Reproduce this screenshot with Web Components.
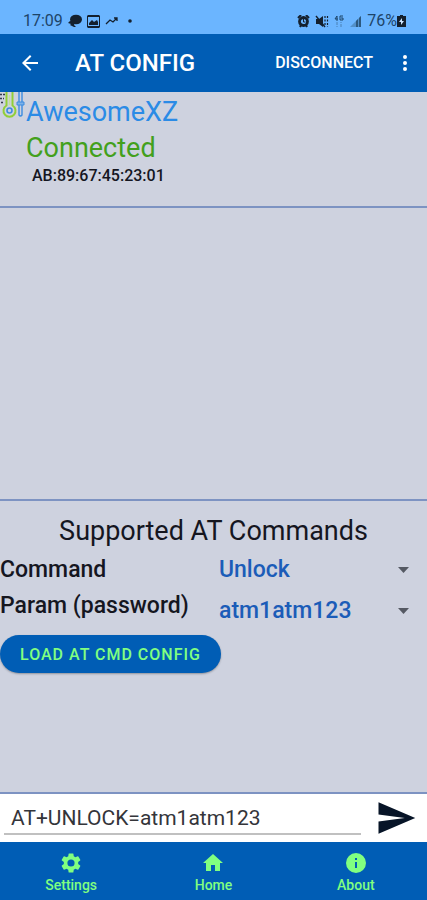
<!DOCTYPE html>
<html lang="en">
<head>
<meta charset="utf-8">
<meta name="viewport" content="width=device-width, initial-scale=1">
<title>AT Config</title>
<style>
  :root {
    --primary: #005db5;
    --status: #6bb5ff;
    --surface: #ced2df;
    --divider: #7d93c2;
    --accent: #80ff80;
    --link: #1b5cb8;
    --text: #15161f;
  }
  body {
    margin: 0;
    font-family: Roboto, "Liberation Sans", sans-serif;
    color: var(--text);
    background: var(--surface);
  }
</style>
</head>
<body>
<at-config-screen>
  <status-bar time="17:09" battery="76%"></status-bar>
  <app-bar heading="AT CONFIG" action="DISCONNECT"></app-bar>
  <device-info name="AwesomeXZ" state="Connected" address="AB:89:67:45:23:01"></device-info>
  <log-panel></log-panel>
  <command-panel heading="Supported AT Commands" action="LOAD AT CMD CONFIG">
    <select-row name="command" label="Command" value="Unlock"></select-row>
    <select-row name="param" label="Param (password)" value="atm1atm123" tall></select-row>
  </command-panel>
  <command-input value="AT+UNLOCK=atm1atm123"></command-input>
  <bottom-nav>
    <nav-item icon="settings" href="#settings">Settings</nav-item>
    <nav-item icon="home" href="#home">Home</nav-item>
    <nav-item icon="info" href="#about">About</nav-item>
  </bottom-nav>
</at-config-screen>

<script>
const icons = {
  settings: "M19.14 12.94c.04-.3.06-.61.06-.94s-.02-.64-.07-.94l2.03-1.58a.49.49 0 0 0 .12-.61l-1.92-3.32a.49.49 0 0 0-.59-.22l-2.39.96a7 7 0 0 0-1.62-.94l-.36-2.54a.48.48 0 0 0-.48-.41h-3.84a.47.47 0 0 0-.47.41l-.36 2.54c-.59.24-1.13.57-1.62.94l-2.39-.96a.48.48 0 0 0-.59.22L2.74 8.87a.47.47 0 0 0 .12.61l2.03 1.58a6 6 0 0 0-.02 1.88l-2.03 1.58a.49.49 0 0 0-.12.61l1.92 3.32c.12.22.37.29.59.22l2.39-.96c.5.38 1.03.7 1.62.94l.36 2.54c.05.24.24.41.48.41h3.84c.24 0 .44-.17.47-.41l.36-2.54a7 7 0 0 0 1.62-.94l2.39.96c.22.08.47 0 .59-.22l1.92-3.32a.47.47 0 0 0-.12-.61zM12 15.6a3.6 3.6 0 1 1 0-7.2 3.6 3.6 0 0 1 0 7.2z",
  home: "M10 20v-6h4v6h5v-8h3L12 3 2 12h3v8z",
  info: "M12 2a10 10 0 1 0 0 20 10 10 0 0 0 0-20zm1 15h-2v-6h2zm0-8h-2V7h2z",
  back: "M20 11H7.83l5.59-5.59L12 4l-8 8 8 8 1.41-1.41L7.83 13H20z",
  more: "M12 8a2 2 0 1 0 0-4 2 2 0 0 0 0 4zm0 2a2 2 0 1 0 0 4 2 2 0 0 0 0-4zm0 6a2 2 0 1 0 0 4 2 2 0 0 0 0-4z",
  send: "M2 21L23 12 2 3v7l15 2-15 2z"
};

const icon = (name, size) =>
  `<svg width="${size}" height="${size}" viewBox="0 0 24 24" fill="currentColor" aria-hidden="true"><path d="${icons[name]}"/></svg>`;

class BaseElement extends HTMLElement {
  constructor() {
    super();
    this.attachShadow({ mode: "open" });
  }
  connectedCallback() {
    this.shadowRoot.innerHTML = this.template();
  }
  attr(name) {
    return this.getAttribute(name) || "";
  }
}

class AtConfigScreen extends BaseElement {
  template() {
    return `
      <style>
        :host {
          display: flex;
          flex-direction: column;
          min-height: 100vh;
        }
      </style>
      <slot></slot>
    `;
  }
}

class StatusBar extends BaseElement {
  template() {
    return `
      <style>
        :host {
          display: flex;
          align-items: center;
          justify-content: space-between;
          box-sizing: border-box;
          height: 34px;
          padding: 8px 21px 0 23px;
          background: var(--status);
          color: #1d4468;
          font-size: 16px;
          line-height: 20px;
        }
        .group {
          display: flex;
          align-items: center;
          gap: 5px;
        }
        .charge {
          display: flex;
          align-items: center;
        }
        svg {
          display: block;
          fill: #14202e;
        }
      </style>
      <div class="group">
        <span>${this.attr("time")}</span>
        <svg width="14" height="14" viewBox="0 0 14 14"><ellipse cx="8" cy="5.5" rx="6" ry="4.8"/><path d="M2 7l-2 2 3 1-1 1 4 2h2l-2-2 1-3z"/></svg>
        <svg width="13" height="13" viewBox="0 0 13 13"><path fill-rule="evenodd" d="M1 0h11l1 1v11l-1 1H1l-1-1V1zm0 2v9h11V2zm1 8V8l3-3 2 2 3-2 1 2v3z"/></svg>
        <svg width="13" height="10" viewBox="0 0 13 10"><path d="M1 8l4-4 3 2 4-4M9 2h3v3" fill="none" stroke="#14202e" stroke-width="1.3"/></svg>
        <svg width="12" height="6" viewBox="0 0 12 6"><circle cx="7" cy="3" r="1.8"/></svg>
      </div>
      <div class="group">
        <svg width="13" height="13" viewBox="0 0 13 13"><path d="M1 3l3-3M12 3L9 0M3 12l1-2M10 12l-1-2" stroke="#14202e" stroke-width="2"/><circle cx="6.5" cy="6.5" r="4" fill="none" stroke="#14202e" stroke-width="2.8"/><path d="M6.5 4v3h2" fill="none" stroke="#14202e"/></svg>
        <svg width="14" height="13" viewBox="0 0 14 13"><path d="M1 4h3l4-3v11L4 9H1z"/><path d="M1 1l9 11" stroke="#14202e" stroke-width="1.4"/><path d="M10 1v10M12.5 1v11" stroke="#14202e" stroke-width="1.2" stroke-dasharray="2 1.5"/></svg>
        <svg width="10" height="13" viewBox="0 0 10 13"><path d="M3 1L1 4h3M3 1v5M9 1H6v4h3V3H7" fill="none" stroke="#1d4468"/><path d="M3 7v5M7 12V7" stroke="#4a80b4" stroke-dasharray="3 1"/></svg>
        <svg width="13" height="12" viewBox="0 0 13 12"><path d="M1 12L12 1v11z" fill="#5290c9"/><path d="M7 12V6l2-2v8zM10 12V3l2-2v11z" fill="#2c587e"/></svg>
        <div class="charge">
          <span>${this.attr("battery")}</span>
          <svg width="9" height="12" viewBox="0 0 9 12"><path d="M3 0h3v1h3v11H0V1h3z"/><path d="M5 3L2 7h2v3l3-4H5z" fill="#cfe6ff"/></svg>
        </div>
      </div>
    `;
  }
}

class AppBar extends BaseElement {
  template() {
    return `
      <style>
        :host {
          display: flex;
          align-items: center;
          box-sizing: border-box;
          height: 58px;
          padding: 0 10px 0 18px;
          background: var(--primary);
          color: #fff;
        }
        h1 {
          flex: 1;
          margin: 0 0 0 33px;
          font-size: 24px;
          font-weight: 500;
          line-height: 32px;
        }
        button {
          display: flex;
          padding: 0;
          border: 0;
          background: none;
          color: inherit;
          font: 500 16px/24px Roboto, "Liberation Sans", sans-serif;
        }
        .more {
          margin-left: 20px;
        }
      </style>
      <button aria-label="Back">${icon("back", 24)}</button>
      <h1>${this.attr("heading")}</h1>
      <button>${this.attr("action")}</button>
      <button class="more" aria-label="More options">${icon("more", 24)}</button>
    `;
  }
}

class DeviceInfo extends BaseElement {
  template() {
    return `
      <style>
        :host {
          display: flex;
          align-items: flex-start;
          box-sizing: border-box;
          height: 116px;
          border-bottom: 2px solid var(--divider);
        }
        svg {
          flex: none;
          width: 26px;
          height: 28px;
        }
        p {
          margin: 0;
          font-size: 27px;
          line-height: 36px;
        }
        .name {
          margin-top: 2px;
          color: #2b8be6;
        }
        .state {
          color: #43a01c;
        }
        .address {
          padding-left: 6px;
          font-size: 16px;
          font-weight: 500;
          line-height: 20px;
        }
      </style>
      <svg viewBox="0 0 26 28" fill="none" aria-hidden="true">
        <path d="M0 2.500h5M0 6.500h4M1 10.500h3" stroke="#343b4d" stroke-width="1.5" stroke-dasharray="2 1"/>
        <path d="M6.5 0v13.500a6 6 0 1 0 6 0V0" stroke="#91cf38" stroke-width="2"/>
        <path d="M9.5 3v10" stroke="#c3dd9f" stroke-width="1.5"/>
        <circle cx="9.5" cy="18.500" r="2.500" stroke="#3d8ce0" stroke-width="1.6"/>
        <path d="M19 0v10M22 0v10M19 13v10q1.500 2 3 0V13" stroke="#3d8ce0" stroke-width="1.4"/>
        <path d="M17 10h7v3h-7z" fill="#7fb2e8" stroke="#3d8ce0"/>
      </svg>
      <div>
        <p class="name">${this.attr("name")}</p>
        <p class="state">${this.attr("state")}</p>
        <p class="address">${this.attr("address")}</p>
      </div>
    `;
  }
}

class LogPanel extends BaseElement {
  template() {
    return `
      <style>
        :host {
          display: block;
          flex: 1 1 0;
          box-sizing: border-box;
          border-bottom: 2px solid var(--divider);
        }
      </style>
      <slot></slot>
    `;
  }
}

class CommandPanel extends BaseElement {
  template() {
    return `
      <style>
        :host {
          display: block;
          flex: 1 1 0;
          box-sizing: border-box;
          border-bottom: 2px solid var(--divider);
        }
        h2 {
          margin: 0;
          padding: 12px 0 3px;
          font-size: 27px;
          font-weight: 400;
          line-height: 36px;
          text-align: center;
        }
        button {
          height: 38px;
          margin-top: 1px;
          padding: 2px 20px 0;
          border: 0;
          border-radius: 19px;
          background: var(--primary);
          color: var(--accent);
          font: 500 16px/24px Roboto, "Liberation Sans", sans-serif;
          letter-spacing: 1px;
          box-shadow: 0 1px 2px rgba(0, 0, 0, 0.3);
        }
      </style>
      <h2>${this.attr("heading")}</h2>
      <slot></slot>
      <button>${this.attr("action")}</button>
    `;
  }
}

class SelectRow extends BaseElement {
  template() {
    const id = this.attr("name");
    return `
      <style>
        :host {
          display: grid;
          grid-template-columns: 219fr 208fr;
          height: 36px;
          font-size: 23px;
          font-weight: 500;
          line-height: 36px;
        }
        :host([tall]) {
          height: 46px;
        }
        .field {
          display: grid;
          align-items: center;
          padding-right: 18px;
        }
        select, svg {
          grid-area: 1 / 1;
        }
        select {
          appearance: none;
          width: 100%;
          height: 100%;
          padding: 0;
          border: 0;
          background: none;
          color: var(--link);
          font: inherit;
        }
        svg {
          justify-self: end;
          pointer-events: none;
        }
      </style>
      <label for="${id}">${this.attr("label")}</label>
      <div class="field">
        <select id="${id}"><option>${this.attr("value")}</option></select>
        <svg width="11" height="6" viewBox="0 0 11 6" fill="#555963"><path d="M0 0h11L5.5 6z"/></svg>
      </div>
    `;
  }
}

class CommandInput extends BaseElement {
  template() {
    return `
      <style>
        :host {
          display: flex;
          align-items: center;
          box-sizing: border-box;
          height: 48px;
          padding: 0 10px 0 4px;
          background: #fff;
        }
        input {
          flex: 1;
          min-width: 0;
          height: 34px;
          box-sizing: border-box;
          padding: 2px 7px 0;
          border: 0;
          border-bottom: 2px solid #c0c0c0;
          outline: 0;
          background: none;
          color: #34353a;
          font: 21px/24px Roboto, "Liberation Sans", sans-serif;
        }
        button {
          display: flex;
          margin-left: 14px;
          padding: 0;
          border: 0;
          background: none;
          color: #071427;
        }
      </style>
      <input type="text" aria-label="AT command" value="${this.attr("value")}">
      <button aria-label="Send">${icon("send", 42)}</button>
    `;
  }
}

class BottomNav extends BaseElement {
  template() {
    return `
      <style>
        :host {
          display: block;
          background: var(--primary);
        }
        nav {
          display: grid;
          grid-template-columns: repeat(3, 1fr);
          height: 58px;
        }
      </style>
      <nav><slot></slot></nav>
    `;
  }
}

class NavItem extends BaseElement {
  template() {
    return `
      <style>
        :host {
          display: block;
        }
        a {
          display: flex;
          flex-direction: column;
          align-items: center;
          padding-top: 9px;
          color: var(--accent);
          font-size: 14px;
          font-weight: 500;
          line-height: 20px;
          text-decoration: none;
        }
      </style>
      <a href="${this.attr("href")}">${icon(this.attr("icon"), 24)}<span><slot></slot></span></a>
    `;
  }
}

customElements.define("at-config-screen", AtConfigScreen);
customElements.define("status-bar", StatusBar);
customElements.define("app-bar", AppBar);
customElements.define("device-info", DeviceInfo);
customElements.define("log-panel", LogPanel);
customElements.define("command-panel", CommandPanel);
customElements.define("select-row", SelectRow);
customElements.define("command-input", CommandInput);
customElements.define("bottom-nav", BottomNav);
customElements.define("nav-item", NavItem);
</script>
</body>
</html>
